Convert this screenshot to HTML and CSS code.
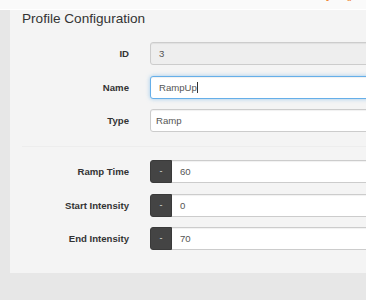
FILE: index.html
```html
<!DOCTYPE html>
<html lang="en">
<head>
    <meta charset="UTF-8">
    <meta name="viewport" content="width=device-width, initial-scale=1.0">
    <title>Profile Configuration</title>
    <link rel="stylesheet" href="styles.css">
</head>
<body>
    <div class="topbar">
        <span class="topbar-links">y &nbsp;&nbsp;()</span>
    </div>
    <div class="page">
        <div class="panel">
            <h3 class="panel-title">Profile Configuration</h3>
            <div class="form-row">
                <label>ID</label>
                <div class="form-control readonly">3</div>
            </div>
            <div class="form-row">
                <label>Name</label>
                <div class="form-control focused">RampUp<span class="caret"></span></div>
            </div>
            <div class="form-row">
                <label>Type</label>
                <div class="form-control select">Ramp</div>
            </div>

            <hr class="divider">

            <div class="form-row">
                <label>Ramp Time</label>
                <div class="input-group">
                    <span class="btn-minus">-</span>
                    <div class="form-control grouped">60</div>
                </div>
            </div>
            <div class="form-row">
                <label>Start Intensity</label>
                <div class="input-group">
                    <span class="btn-minus">-</span>
                    <div class="form-control grouped">0</div>
                </div>
            </div>
            <div class="form-row">
                <label>End Intensity</label>
                <div class="input-group">
                    <span class="btn-minus">-</span>
                    <div class="form-control grouped">70</div>
                </div>
            </div>
        </div>
    </div>
</body>
</html>
```
FILE: styles.css
```css
html, body {
    margin: 0;
    padding: 0;
    overflow: hidden;
}

body {
    font-family: "Liberation Sans", Arial, sans-serif;
    background-color: #e7e7e7;
    color: #333;
    height: 300px;
}

.topbar {
    height: 10px;
    background-color: #fafafa;
    border-bottom: 1px solid #fff;
    box-sizing: border-box;
    overflow: hidden;
    display: flex;
    justify-content: flex-end;
    align-items: flex-end;
}

.topbar-links {
    color: #f0883a;
    font-size: 14px;
    line-height: 14px;
    margin-bottom: 9px;
    margin-right: 12px;
}

.page {
    padding-left: 10px;
    width: 420px;
}

.panel {
    background-color: #f4f4f4;
    padding: 1px 0 23px 12px;
}

.panel-title {
    margin: 0 0 15px 0;
    font-size: 13.6px;
    line-height: 16px;
    font-weight: normal;
    color: #333;
}

.form-row {
    display: grid;
    grid-template-columns: 107px 1fr;
    column-gap: 21px;
    align-items: center;
    margin-bottom: 10.5px;
}

.form-row:last-child {
    margin-bottom: 0;
}

.form-row label {
    text-align: right;
    font-weight: bold;
    font-size: 9.6px;
    color: #333;
}

.form-control {
    height: 23px;
    box-sizing: border-box;
    border: 1px solid #ccc;
    border-radius: 3px;
    background-color: #fff;
    padding: 0 8px;
    font-size: 9.6px;
    line-height: 21px;
    color: #555;
    box-shadow: inset 0 1px 1px rgba(0, 0, 0, 0.06);
}

.form-control.readonly {
    background-color: #eee;
}

.form-control.focused {
    border-color: #66afe9;
    box-shadow: inset 0 1px 1px rgba(0, 0, 0, 0.06), 0 0 4px rgba(102, 175, 233, 0.6);
}

.form-control.select {
    padding-left: 5px;
}

.caret {
    display: inline-block;
    width: 1px;
    height: 11px;
    background-color: #333;
    vertical-align: -2px;
}

.divider {
    border: 0;
    border-top: 1px solid #ededed;
    margin: 14px 0 13px 0;
}

.input-group {
    display: flex;
}

.btn-minus {
    width: 22px;
    height: 23px;
    box-sizing: border-box;
    background-color: #444;
    border: 1px solid #3a3a3a;
    border-radius: 3px 0 0 3px;
    color: #ddd;
    font-size: 9px;
    line-height: 21px;
    text-align: center;
}

.form-control.grouped {
    flex: 1;
    border-radius: 0 3px 3px 0;
    border-left: 0;
    padding-left: 8px;
}
```
